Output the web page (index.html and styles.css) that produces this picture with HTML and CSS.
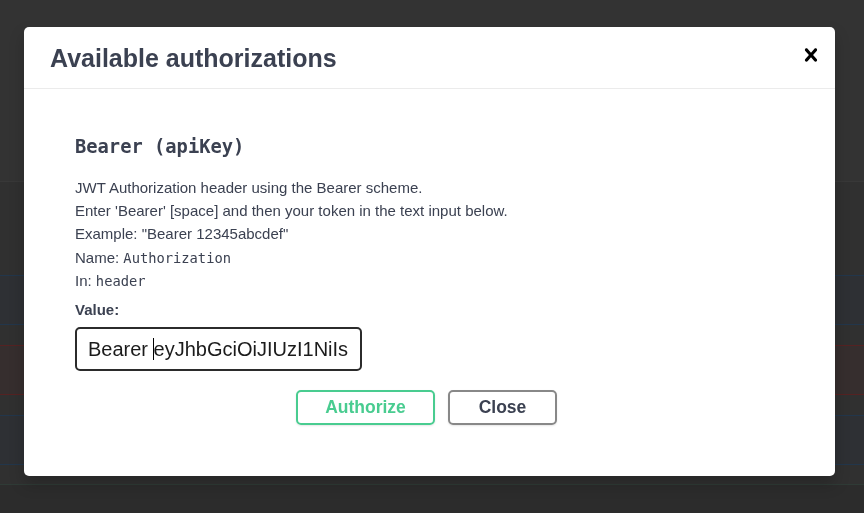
FILE: index.html
```html
<!DOCTYPE html>
<html lang="en">
<head>
<meta charset="utf-8">
<title>Available authorizations</title>
<link rel="stylesheet" href="styles.css">
</head>
<body>
<div class="page">
  <div class="page-top"></div>
  <div class="page-gap page-gap-first"></div>
  <div class="opblock opblock-get"></div>
  <div class="page-gap"></div>
  <div class="opblock opblock-delete"></div>
  <div class="page-gap"></div>
  <div class="opblock opblock-get"></div>
  <div class="page-gap page-gap-last"></div>
  <div class="page-bottom"></div>
</div>

<div class="modal" role="dialog" aria-labelledby="modal-title">
  <div class="modal-header">
    <h3 class="modal-title" id="modal-title">Available authorizations</h3>
    <button class="modal-close" type="button" aria-label="Close">
      <svg class="close-icon" viewBox="0 0 20 20" aria-hidden="true"><path d="M14.348 14.849c-.469.469-1.229.469-1.697 0L10 11.819l-2.651 3.029c-.469.469-1.229.469-1.697 0-.469-.469-.469-1.229 0-1.697l2.758-3.15-2.759-3.152c-.469-.469-.469-1.228 0-1.697.469-.469 1.228-.469 1.697 0L10 8.183l2.651-3.031c.469-.469 1.228-.469 1.697 0 .469.469.469 1.229 0 1.697l-2.758 3.152 2.758 3.15c.469.469.469 1.229 0 1.698z"/></svg>
    </button>
  </div>
  <div class="modal-body">
    <h4 class="auth-title">Bearer (apiKey)</h4>
    <div class="auth-desc">
      <p class="desc-line">JWT Authorization header using the Bearer scheme.</p>
      <p class="desc-line">Enter 'Bearer' [space] and then your token in the text input below.</p>
      <p class="desc-line">Example: "Bearer 12345abcdef"</p>
      <p class="desc-line">Name: <code class="code">Authorization</code></p>
      <p class="desc-line">In: <code class="code">header</code></p>
    </div>
    <label class="value-label">Value:</label>
    <div class="value-input">Bearer <span class="caret"></span>eyJhbGciOiJIUzI1NiIs</div>
    <div class="btn-row">
      <button class="btn btn-authorize" type="button">Authorize</button>
      <button class="btn btn-close" type="button">Close</button>
    </div>
  </div>
</div>
</body>
</html>
```

FILE: styles.css
```css
html, body {
  margin: 0;
  padding: 0;
}

body {
  background: #2c2c2c;
  font-family: "Liberation Sans", Arial, sans-serif;
  width: 864px;
  height: 513px;
  overflow: hidden;
}

.page {
  display: flex;
  flex-direction: column;
}

.page-top {
  height: 181px;
  background: #333333;
  border-bottom: 1px solid #383838;
}

.page-gap {
  height: 20px;
  background: #303030;
}

.page-gap-first {
  height: 93px;
}

.opblock {
  height: 48px;
}

.opblock-get {
  background: #2e3034;
  border-top: 1px solid #22364b;
  border-bottom: 1px solid #22364b;
}

.opblock-delete {
  background: #362e2e;
  border-top: 1px solid #552222;
  border-bottom: 1px solid #552222;
}

.page-gap-last {
  height: 19px;
  border-bottom: 1px solid #2f3b36;
}

.page-bottom {
  height: 40px;
  background: #2c2c2c;
}

/* Modal (overlays the page) */
.modal {
  position: fixed;
  left: 24px;
  top: 27px;
  width: 811px;
  background: #ffffff;
  border-radius: 5px;
  box-shadow: 0 8px 16px rgba(0, 0, 0, 0.2);
  color: #3b4151;
}

.modal-header {
  display: flex;
  align-items: flex-start;
  justify-content: space-between;
  padding: 19px 11px 17px 26px;
  border-bottom: 1px solid #ebebeb;
}

.modal-title {
  margin: 0;
  font-size: 25px;
  line-height: 25px;
  font-weight: 700;
  color: #3b4151;
}

.modal-close {
  border: none;
  background: none;
  padding: 0;
  width: 26px;
  height: 21px;
  margin-top: -4px;
  overflow: visible;
  display: flex;
  align-items: flex-start;
  justify-content: center;
  cursor: pointer;
}

.close-icon {
  width: 26px;
  height: 26px;
  flex: none;
  fill: #000000;
}

.modal-body {
  padding: 49px 51px 51px 51px;
}

.auth-title {
  margin: 0;
  font-family: "DejaVu Sans Mono", monospace;
  font-size: 18.75px;
  line-height: 18.75px;
  font-weight: 700;
  color: #3b4151;
}

.auth-desc {
  margin-top: 19px;
}

.desc-line {
  margin: 0;
  font-size: 15px;
  line-height: 23.3px;
  color: #3b4151;
}

.code {
  font-family: "DejaVu Sans Mono", monospace;
  font-size: 13.75px;
  line-height: 1;
}

.value-label {
  display: block;
  margin-top: 6px;
  font-size: 15px;
  line-height: 23.3px;
  font-weight: 700;
  color: #3b4151;
}

.value-input {
  box-sizing: border-box;
  margin-top: 5px;
  width: 287px;
  height: 44px;
  padding: 0 11px;
  border: 2px solid #2b2b2b;
  border-radius: 5px;
  font-size: 20px;
  line-height: 40px;
  color: #1b1b1b;
  white-space: nowrap;
  overflow: hidden;
}

.caret {
  display: inline-block;
  width: 1px;
  height: 22px;
  background: #000000;
  vertical-align: -4px;
  margin-left: -1px;
}

.btn-row {
  display: flex;
  justify-content: center;
  gap: 13px;
  margin-top: 19.5px;
  padding-right: 6px;
}

.btn {
  box-sizing: border-box;
  height: 35px;
  border: 2px solid #888888;
  border-radius: 5px;
  background: transparent;
  font-family: "Liberation Sans", Arial, sans-serif;
  font-size: 17.5px;
  font-weight: 700;
  line-height: 31px;
  padding: 0;
  box-shadow: 0 1px 2px rgba(0, 0, 0, 0.1);
  cursor: pointer;
}

.btn-authorize {
  width: 139px;
  border-color: #49cc90;
  color: #49cc90;
}

.btn-close {
  width: 109px;
  color: #3b4151;
}
```
